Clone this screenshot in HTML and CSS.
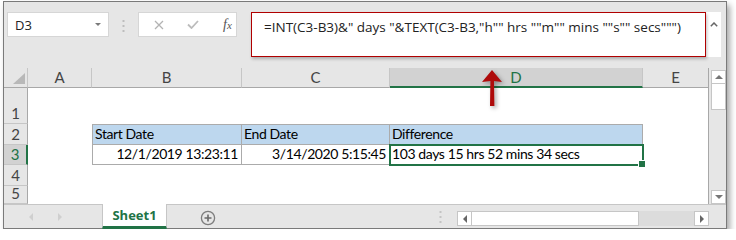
FILE: index.html
```html
<!DOCTYPE html>
<html lang="en">
<head>
    <meta charset="UTF-8">
    <title>Excel - days hrs mins secs</title>
    <link rel="stylesheet" href="styles.css">
</head>
<body>
    <div class="window">
        <div class="formula-bar">
            <div class="name-box">
                <span>D3</span>
                <span class="caret"></span>
            </div>
            <svg class="grip" width="3" height="12" viewBox="0 0 3 12">
                <rect x="0.5" y="0" width="2" height="2" fill="#bdbdbd"/>
                <rect x="0.5" y="5" width="2" height="2" fill="#bdbdbd"/>
                <rect x="0.5" y="10" width="2" height="2" fill="#bdbdbd"/>
            </svg>
            <div class="fx-box">
                <svg class="ico-x" width="10" height="10" viewBox="0 0 10 10">
                    <path d="M1 1 L9 9 M9 1 L1 9" stroke="#b3b3b3" stroke-width="1.3" fill="none"/>
                </svg>
                <svg class="ico-ok" width="12" height="9" viewBox="0 0 12 9">
                    <path d="M1 4.5 L4.5 8 L11 1" stroke="#bcbcbc" stroke-width="1.8" fill="none"/>
                </svg>
                <span class="ico-fx"><i>f</i><i class="fx-x">x</i></span>
            </div>
            <div class="formula">
                <div class="formula-text">=INT(C3-B3)&amp;" days "&amp;TEXT(C3-B3,"h"" hrs ""m"" mins ""s"" secs""")</div>
                <div class="expand">
                    <svg width="8" height="5" viewBox="0 0 8 5">
                        <path d="M0.8 4.2 L4 1 L7.2 4.2" stroke="#666" stroke-width="1.5" fill="none"/>
                    </svg>
                </div>
            </div>
        </div>

        <div class="sheet">
            <div class="corner">
                <svg width="12" height="11" viewBox="0 0 12 11"><polygon points="12,0 12,11 0,11" fill="#b8b8b8"/></svg>
            </div>
            <div class="ch">A</div>
            <div class="ch">B</div>
            <div class="ch">C</div>
            <div class="ch active">D</div>
            <div class="ch last">E</div>
            <div class="vscroll">
                <div class="sb-btn"><span class="tri-up"></span></div>
                <div class="sb-thumb"></div>
                <div class="sb-track"></div>
                <div class="sb-btn"><span class="tri-down"></span></div>
            </div>

            <div class="rh">1</div>
            <div class="cell"></div>
            <div class="cell"></div>
            <div class="cell"></div>
            <div class="cell"></div>
            <div class="cell last"></div>

            <div class="rh">2</div>
            <div class="cell"></div>
            <div class="cell tb head first">Start Date</div>
            <div class="cell tb head">End Date</div>
            <div class="cell tb head">Difference</div>
            <div class="cell last"></div>

            <div class="rh active">3</div>
            <div class="cell"></div>
            <div class="cell tb first num">12/1/2019 13:23:11</div>
            <div class="cell tb num">3/14/2020 5:15:45</div>
            <div class="cell tb selected">103 days 15 hrs 52 mins 34 secs</div>
            <div class="cell last"></div>

            <div class="rh">4</div>
            <div class="cell"></div>
            <div class="cell"></div>
            <div class="cell"></div>
            <div class="cell"></div>
            <div class="cell last"></div>

            <div class="rh">5</div>
            <div class="cell"></div>
            <div class="cell"></div>
            <div class="cell"></div>
            <div class="cell"></div>
            <div class="cell last"></div>
        </div>

        <div class="tabs">
            <div class="nav">
                <span class="tri-left"></span>
                <span class="tri-right"></span>
            </div>
            <div class="tab">Sheet1</div>
            <div class="add">
                <svg width="16" height="16" viewBox="0 0 16 16">
                    <circle cx="8" cy="8" r="6.6" stroke="#7d7d7d" stroke-width="1.3" fill="none"/>
                    <path d="M8 4.5 V11.5 M4.5 8 H11.5" stroke="#6a6a6a" stroke-width="1.6"/>
                </svg>
            </div>
            <div class="spacer"></div>
            <svg class="grip2" width="3" height="12" viewBox="0 0 3 12">
                <rect x="0.5" y="0" width="2" height="2" fill="#c4c4c4"/>
                <rect x="0.5" y="5" width="2" height="2" fill="#c4c4c4"/>
                <rect x="0.5" y="10" width="2" height="2" fill="#c4c4c4"/>
            </svg>
            <div class="hscroll">
                <div class="hb"><span class="tri-left dark"></span></div>
                <div class="h-thumb"></div>
                <div class="h-track"></div>
                <div class="hb"><span class="tri-right dark"></span></div>
            </div>
        </div>

        <!-- annotation arrow pointing at the formula -->
        <svg class="arrow" width="22" height="38" viewBox="0 0 22 38">
            <path d="M10 0 L20 12 L12 11 L12.4 36 L8 36 L8.4 11 L0 12 Z" fill="#ae0a0a"/>
        </svg>
    </div>
</body>
</html>
```

FILE: styles.css
```css
* {
    box-sizing: border-box;
}
body {
    margin: 0;
    background: #fff;
    font-family: "Lato", "Liberation Sans", sans-serif;
}
.window {
    position: relative;
    margin: 1px 0 0 3px;
    width: 724px;
    height: 228px;
    border: 1px solid #7a7a7a;
    background: #e6e6e6;
    box-shadow: 3px 4px 6px rgba(0, 0, 0, 0.35);
    display: flex;
    flex-direction: column;
}

/* formula bar */
.formula-bar {
    height: 66px;
    flex: none;
    display: flex;
    align-items: flex-start;
    padding-top: 10px;
    font-family: "Open Sans", sans-serif;
    font-size: 13px;
    color: #222;
}
.name-box {
    margin-left: 3px;
    width: 102px;
    height: 25px;
    background: #fff;
    border: 1px solid #d6d6d6;
    display: flex;
    align-items: center;
    justify-content: space-between;
    padding: 0 7px;
}
.caret {
    border-left: 3px solid transparent;
    border-right: 3px solid transparent;
    border-top: 3px solid #7a7a7a;
}
.grip {
    margin: 8px 0 0 13px;
}
.fx-box {
    margin-left: 13px;
    width: 99px;
    height: 25px;
    background: #fff;
    border: 1px solid #d6d6d6;
    display: flex;
    align-items: center;
    padding-left: 15px;
}
.ico-ok {
    margin-left: 23px;
}
.ico-fx {
    margin-left: 24px;
    font-family: "Liberation Serif", serif;
    font-size: 14px;
    color: #555;
}
.fx-x {
    font-size: 11px;
}
.formula {
    margin-left: 14px;
    width: 470px;
    height: 45px;
    background: #fff;
    display: flex;
}
.formula-text {
    width: 455px;
    height: 45px;
    border: 1px solid #b00000;
    padding: 4px 0 0 12px;
    font-size: 13.5px;
    line-height: 20px;
    box-shadow: 1px 2px 3px rgba(0, 0, 0, 0.25);
}
.expand {
    flex: 1;
    display: flex;
    justify-content: center;
    padding-top: 10px;
}

/* grid */
.sheet {
    flex: none;
    display: grid;
    grid-template-columns: 24px 64px 150px 148px 253px 66px 17px;
    grid-template-rows: 20px 36px 21px 20px 21px 18px;
    background: #fff;
    font-size: 14px;
    color: #000;
}
.corner {
    background: #e6e6e6;
    border-right: 1px solid #c6c6c6;
    border-bottom: 1px solid #a8a8a8;
    display: flex;
    align-items: flex-end;
    justify-content: flex-end;
    padding: 0 2px 3px 0;
}
.ch {
    background: #e6e6e6;
    border-right: 1px solid #c6c6c6;
    border-bottom: 1px solid #a8a8a8;
    text-align: center;
    line-height: 19px;
    font-size: 15px;
    color: #444;
}
.ch.active {
    background: #d2d2d2;
    color: #217346;
    border-bottom: 2px solid #217346;
}
.ch.last {
    border-right-color: #a8a8a8;
}
.rh {
    background: #e6e6e6;
    border-right: 1px solid #a8a8a8;
    border-bottom: 1px solid #c6c6c6;
    display: flex;
    align-items: flex-end;
    justify-content: center;
    color: #444;
    font-size: 15px;
    line-height: 18px;
    padding-bottom: 1px;
}
.rh.active {
    background: #d2d2d2;
    color: #217346;
    border-right: 2px solid #217346;
}
.cell {
    display: flex;
    align-items: flex-end;
    line-height: 18px;
    letter-spacing: -0.4px;
    padding: 0 3px 1px 2px;
    white-space: nowrap;
}
.cell.last {
    border-right: 1px solid #a8a8a8;
}
.tb {
    border-right: 1px solid #ababab;
    border-bottom: 1px solid #ababab;
}
.tb.first {
    border-left: 1px solid #ababab;
}
.tb.head {
    background: #bdd7ee;
    border-top: 1px solid #ababab;
}
.num {
    justify-content: flex-end;
}
.selected {
    position: relative;
    z-index: 1;
    outline: 2px solid #217346;
    outline-offset: -1px;
}
.selected::after {
    content: "";
    position: absolute;
    right: -4px;
    bottom: -4px;
    width: 6px;
    height: 6px;
    background: #217346;
    border: 1px solid #fff;
}

/* vertical scrollbar */
.vscroll {
    grid-column: 7;
    grid-row: 1 / span 6;
    background: #e6e6e6;
    display: flex;
    flex-direction: column;
    padding: 2px 0 0 2px;
}
.sb-btn {
    height: 14px;
    background: #fff;
    border: 1px solid #c6c6c6;
    display: flex;
    align-items: center;
    justify-content: center;
}
.sb-thumb {
    height: 26px;
    background: #fff;
    border: 1px solid #c6c6c6;
    border-top: none;
}
.sb-track {
    flex: 1;
}
.tri-up {
    border-left: 4px solid transparent;
    border-right: 4px solid transparent;
    border-bottom: 4px solid #777;
}
.tri-down {
    border-left: 4px solid transparent;
    border-right: 4px solid transparent;
    border-top: 4px solid #777;
}
.tri-left {
    border-top: 4px solid transparent;
    border-bottom: 4px solid transparent;
    border-right: 4px solid #cfcfcf;
}
.tri-right {
    border-top: 4px solid transparent;
    border-bottom: 4px solid transparent;
    border-left: 4px solid #cfcfcf;
}
.tri-left.dark {
    border-right-color: #666;
}
.tri-right.dark {
    border-left-color: #666;
}

/* sheet tabs */
.tabs {
    flex: 1;
    display: flex;
    border-top: 1px solid #c6c6c6;
}
.nav {
    width: 98px;
    display: flex;
    align-items: center;
    gap: 25px;
    padding: 0 0 1px 25px;
}
.tab {
    width: 65px;
    margin-top: -1px;
    background: #fff;
    border-left: 1px solid #c6c6c6;
    border-right: 1px solid #c6c6c6;
    border-bottom: 3px solid #217346;
    color: #217346;
    font-family: "Open Sans", sans-serif;
    font-weight: bold;
    font-size: 13px;
    text-align: center;
    line-height: 22px;
}
.add {
    margin-left: 33px;
    padding-top: 5px;
}
.spacer {
    flex: 1;
}
.grip2 {
    margin: 6px 15px 0 0;
}
.hscroll {
    display: flex;
    height: 15px;
    margin: 6px 17px 0 0;
}
.hb {
    width: 15px;
    background: #fff;
    border: 1px solid #c6c6c6;
    display: flex;
    align-items: center;
    justify-content: center;
}
.h-thumb {
    width: 167px;
    background: #fff;
    border: 1px solid #c6c6c6;
    border-left: none;
}
.h-track {
    width: 55px;
    background: #dcdcdc;
}

.arrow {
    position: absolute;
    left: 478px;
    top: 68px;
    filter: drop-shadow(2px 2px 2px rgba(0, 0, 0, 0.35));
}
```
